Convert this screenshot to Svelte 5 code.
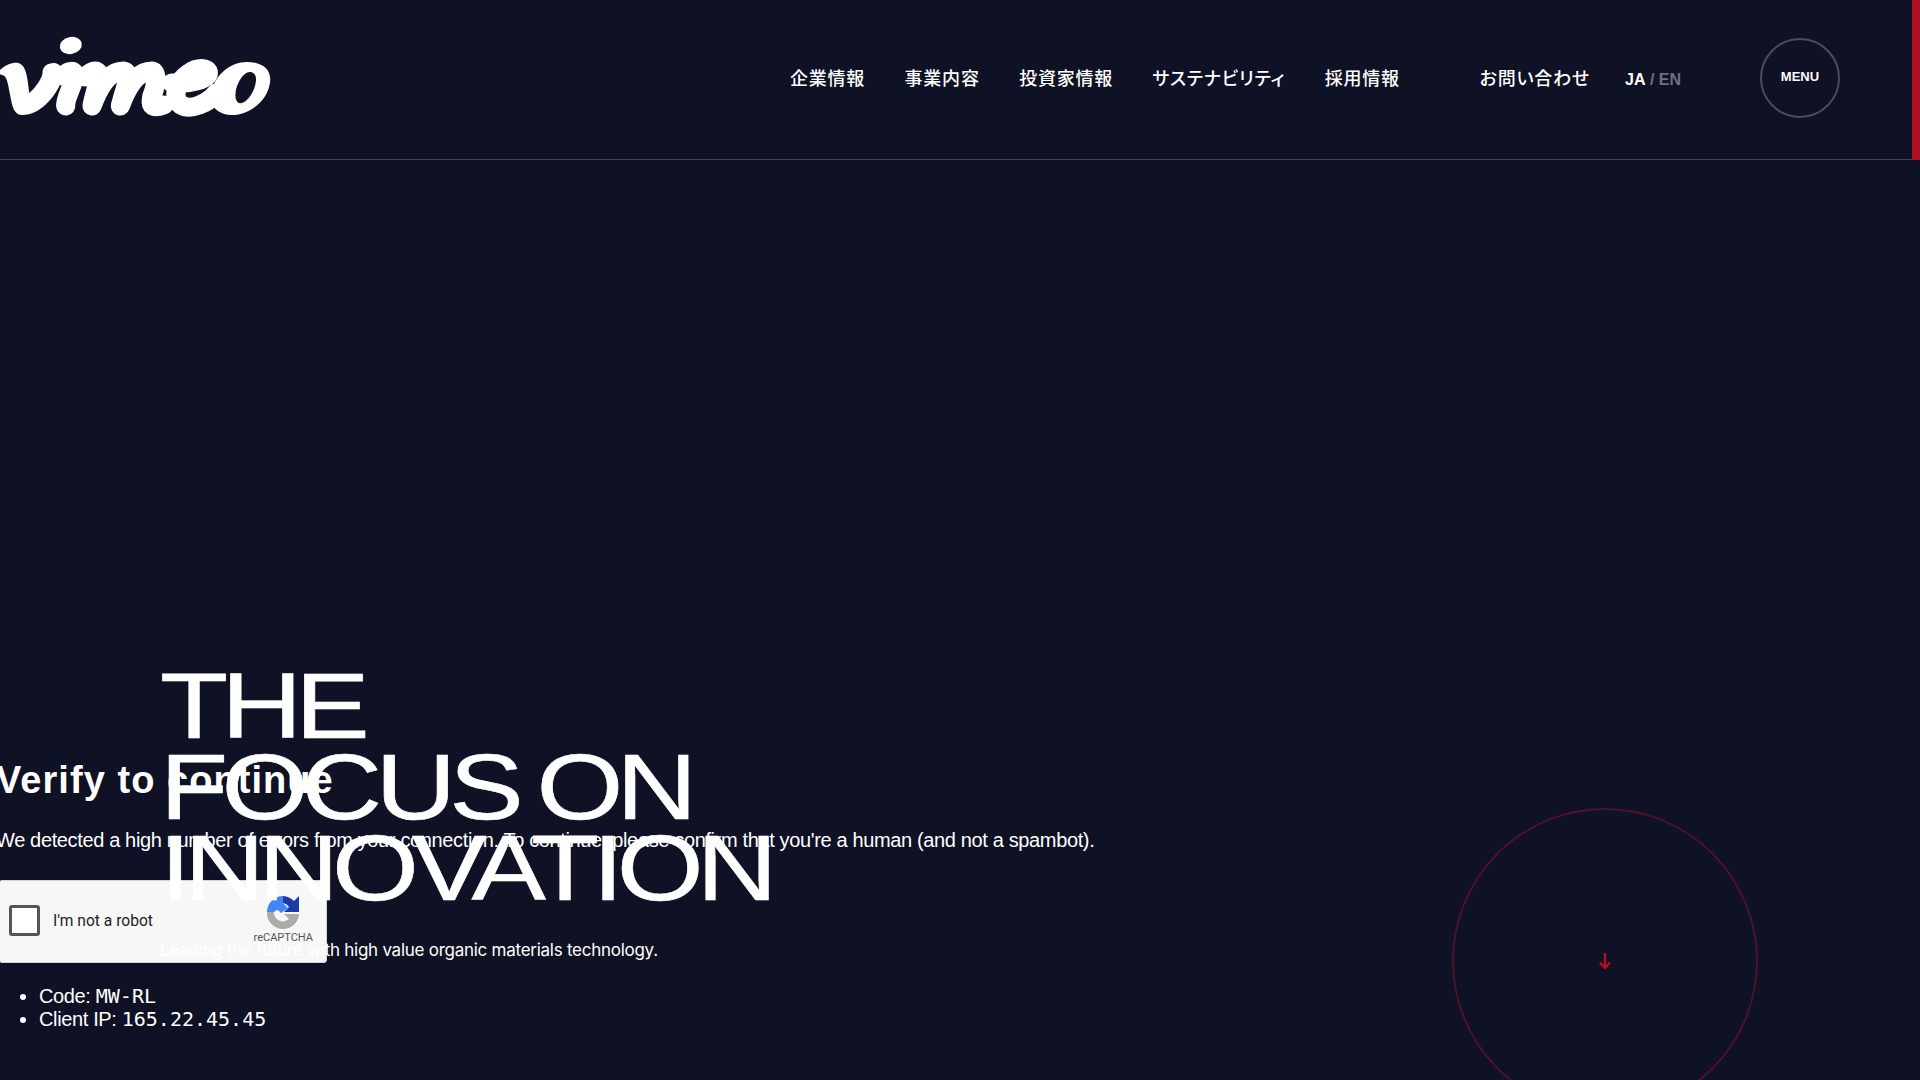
<script>
  const nav = ['企業情報', '事業内容', '投資家情報', 'サステナビリティ', '採用情報'];
</script>

<div class="page">
  <header class="top">
    <svg class="logo" viewBox="0 0 272 80" preserveAspectRatio="none" aria-label="vimeo" role="img">
      <ellipse cx="72" cy="8.5" rx="11" ry="8.5" transform="rotate(-12 72 8.5)" />
      <path d="M-1 36 C6 28 14 25 20 26 C28 28 29 40 31 56 C38 50 44 40 44 36 C44 30 48 26 56 26 C64 27 66 36 62 46 C56 60 42 78 24 78 C16 78 14 70 12 58 C10 48 9 38 4 38 Z" />
      <g class="ink">
        <path d="M64 39 C70 33 76 33 76 38 C74 50 66 62 67 69" />
        <path d="M86 40 C94 32 100 32 100 40 C98 50 94 62 93 69 C100 50 110 34 124 34 C131 35 128 46 124 58 L121 69 C128 50 138 34 152 34 C159 35 156 50 152 60 C150 70 154 72 164 68" />
        <path d="M172 46 C190 48 208 42 208 36 C208 30 197 30 189 36 C177 44 171 60 181 68 C191 74 208 66 216 56" />
      </g>
      <path fill-rule="evenodd" d="M246 25 C262 25 271 33 269 46 C266 66 246 79 230 78 C216 77 209 68 211 56 C214 38 230 25 246 25 Z M249 35 C243 35 236 46 235 56 C234 64 238 67 241 66 C247 65 254 54 255 45 C256 38 253 35 249 35 Z" />
    </svg>
    <nav class="nav">
      {#each nav as item}<a href="#top">{item}</a>{/each}
    </nav>
    <a class="contact" href="#top">お問い合わせ</a>
    <div class="lang"><b>JA</b> / EN</div>
    <button class="menu">MENU</button>
    <span class="edge"></span>
  </header>

  <main class="verify">
    <h1>Verify to continue</h1>
    <p>We detected a high number of errors from your connection. To continue, please confirm that you're a human (and not a spambot).</p>
    <div class="captcha">
      <span class="box"></span>
      <span class="label">I'm not a robot</span>
      <div class="brand">
        <svg viewBox="0 0 34 34" class="rc">
          <path d="M1 17 H8 A9 9 0 0 0 23 24 L18 19 H33 A16 16 0 0 1 1 17 Z" fill="#ababab" />
          <path d="M17 1 A16 16 0 0 1 28 6 L33 1 V17 H18 L23 12 A9 9 0 0 0 17 8 Z" fill="#1c3aa9" />
          <path d="M1 17 A16 16 0 0 1 17 1 V8 L22 13 L15 18 L12 15 A6 6 0 0 0 8 17 Z" fill="#4285f4" />
        </svg>
        <span>reCAPTCHA</span>
      </div>
    </div>
    <ul>
      <li>Code: <code>MW-RL</code></li>
      <li>Client IP: <code>165.22.45.45</code></li>
    </ul>
  </main>

  <section class="hero">
    <h2>THE<br />FOCUS ON<br />INNOVATION</h2>
    <p>Leading the future with high value organic materials technology.</p>
  </section>

  <div class="scroll">
    <svg viewBox="0 0 12 16" class="arrow"><path d="M6 0 V15 M1 9.5 L6 15 L11 9.5" /></svg>
  </div>
</div>

<style>
  :global(body) {
    background: #0f1124;
    margin: 0;
  }
  .page {
    position: relative;
    height: 1080px;
    overflow: hidden;
    display: flex;
    flex-direction: column;
    background: #0f1124;
    color: #fff;
    font-family: "Liberation Sans", Arial, sans-serif;
  }
  .top {
    position: relative;
    flex: none;
    height: 159px;
    display: flex;
    align-items: center;
    border-bottom: 1px solid #43455a;
    padding-right: 80px;
  }
  .logo {
    width: 275px;
    height: 80px;
    margin: 37px 0 0 -2px;
    align-self: flex-start;
    fill: #fff;
    flex: none;
    overflow: visible;
  }
  .ink path {
    fill: none;
    stroke: #fff;
    stroke-width: 19;
    stroke-linecap: round;
    stroke-linejoin: round;
  }
  .nav {
    display: flex;
    gap: 39.5px;
    margin-left: auto;
    margin-top: -6px;
  }
  .nav a, .contact {
    color: #fff;
    text-decoration: none;
    font: 500 18px/1 "Noto Sans CJK JP", sans-serif;
    letter-spacing: 0.042em;
    font-feature-settings: "palt";
  }
  .contact {
    margin-left: 80px;
    margin-top: -6px;
  }
  .lang {
    margin-left: 35px;
    font-size: 16px;
    color: #6f7080;
    font-weight: 700;
    width: 135px;
  }
  .lang b { color: #fff; }
  .menu {
    flex: none;
    width: 80px;
    height: 80px;
    border: 2px solid #4a4c5e;
    border-radius: 50%;
    background: none;
    color: #fff;
    font: 700 13px "Liberation Sans", Arial, sans-serif;
    padding: 0 0 3px;
    margin-top: -3px;
  }
  .edge {
    position: absolute;
    right: 0;
    top: 0;
    width: 8px;
    height: 160px;
    background: #b10f23;
  }
  .verify {
    flex: 1;
    display: flex;
    flex-direction: column;
    justify-content: flex-end;
    margin-left: -1px;
    padding-bottom: 49px;
    letter-spacing: -0.36px;
  }
  h1 {
    margin: 0 0 25px -3px;
    font-size: 38px;
    line-height: 1.2;
    font-weight: 700;
    letter-spacing: 1.05px;
  }
  .verify > p {
    margin: 0 0 29px -3px;
    font-size: 20px;
    line-height: 22px;
  }
  .captcha {
    width: 328px;
    height: 83px;
    box-sizing: border-box;
    padding-bottom: 2px;
    background: #f7f7f7;
    border: 1px solid #d3d3d3;
    border-radius: 3px;
    box-shadow: 0 0 4px 1px rgba(0, 0, 0, 0.08);
    display: flex;
    align-items: center;
    color: #000;
    margin-bottom: 22px;
    letter-spacing: 0;
  }
  .box {
    width: 31px;
    height: 31px;
    box-sizing: border-box;
    border: 3px solid #555;
    border-radius: 3px;
    background: #fff;
    margin-left: 9px;
  }
  .label {
    margin-left: 13px;
    font: 400 15.6px Roboto, sans-serif;
    color: #222;
  }
  .brand {
    margin-left: auto;
    margin-right: 13px;
    margin-top: -3px;
    display: flex;
    flex-direction: column;
    align-items: center;
    gap: 2px;
    font: 11px/13px Roboto, sans-serif;
    color: #555;
  }
  .rc { width: 34px; height: 34px; }
  ul {
    margin: 0;
    padding-left: 40px;
    font-size: 20px;
    line-height: 23px;
  }
  code {
    font-family: "DejaVu Sans Mono", monospace;
    font-size: 20px;
    letter-spacing: 0;
  }
  .hero {
    position: absolute;
    left: 160px;
    top: 666px;
  }
  h2 {
    margin: 0;
    font-size: 93px;
    line-height: 81px;
    font-weight: 400;
    letter-spacing: -5.6px;
    word-spacing: -4px;
    transform: scaleX(1.2);
    transform-origin: left top;
    -webkit-text-stroke: 0.6px #fff;
  }
  .hero p {
    margin: 30px 0 0;
    font: 400 17px/1.3 Inter, sans-serif;
    letter-spacing: -0.26px;
  }
  .scroll {
    position: absolute;
    left: 1452px;
    top: 808px;
    width: 306px;
    height: 306px;
    box-sizing: border-box;
    border: 2px solid #4d1229;
    border-radius: 50%;
    display: flex;
    align-items: center;
    justify-content: center;
  }
  .arrow {
    width: 12px;
    height: 16px;
    fill: none;
    stroke: #b10f23;
    stroke-width: 2.6;
  }
</style>
